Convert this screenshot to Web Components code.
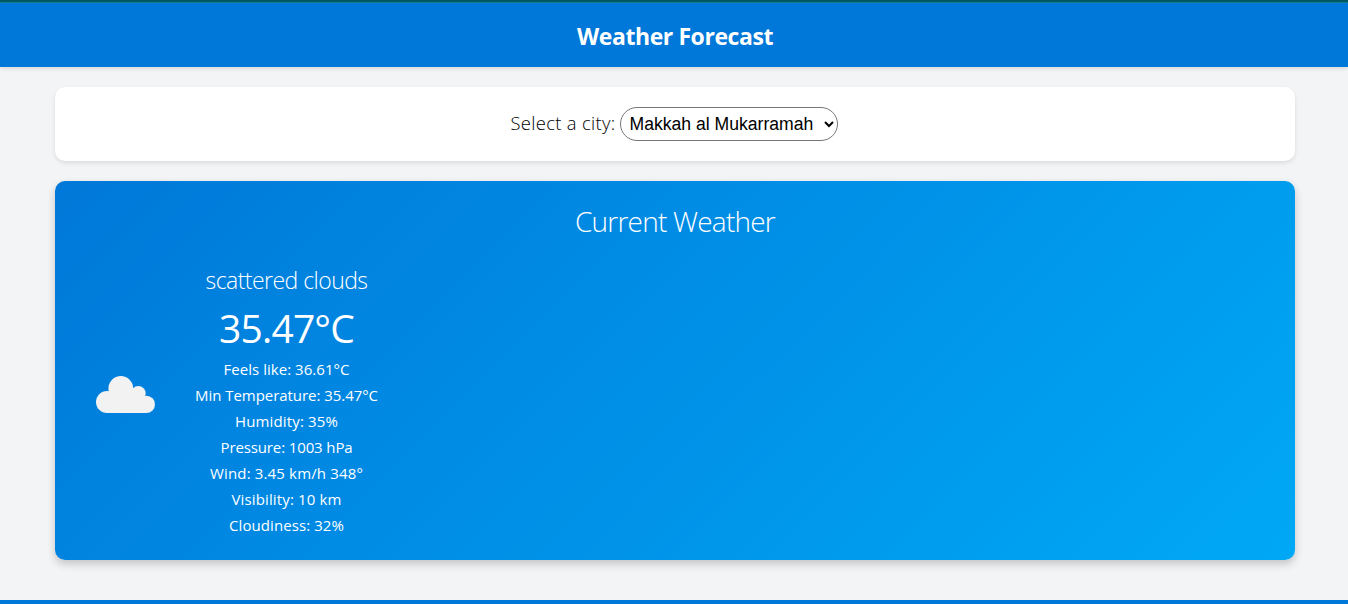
<!DOCTYPE html>
<html lang="en">
<head>
<meta charset="utf-8">
<title>Weather Forecast</title>
<style>
html, body { margin: 0; height: 100%; overflow: hidden; background: #f3f4f6; }
body { font-family: "Open Sans", "Noto Sans", sans-serif; color: #000; }
</style>
</head>
<body>
<weather-app></weather-app>
<script>
// A single line of text whose tracking is adjusted to fill the given advance width.
class FitText extends HTMLElement {
  connectedCallback() {
    const root = this.attachShadow({ mode: 'open' });
    root.innerHTML = '<style>:host{display:inline-block;white-space:nowrap}span{display:inline-block}</style><span><slot></slot></span>';
    const span = root.querySelector('span');
    const target = Number(this.getAttribute('w'));
    const n = this.textContent.length;
    const track = (target - span.getBoundingClientRect().width) / n;
    span.style.letterSpacing = track.toFixed(3) + 'px';
  }
}

class SiteHeader extends HTMLElement {
  connectedCallback() {
    this.attachShadow({ mode: 'open' }).innerHTML = `<style>
      :host { display: flex; justify-content: center; height: 67px; box-sizing: border-box; padding: 4px 0 0 2px;
        background: linear-gradient(#005a66 0 2px, #1a7a8c 2px 3px, #0078d9 3px); color: #fff; box-shadow: 0 2px 4px rgba(0,0,0,.1); }
      h1 { margin: 0; font-size: 23px; font-weight: 700; line-height: 65px; }
    </style><h1><fit-text w="196">Weather Forecast</fit-text></h1>`;
  }
}

class CityPicker extends HTMLElement {
  connectedCallback() {
    this.attachShadow({ mode: 'open' }).innerHTML = `<style>
      :host { display: flex; justify-content: center; align-items: center; gap: 4px; height: 74px; background: #fff;
        box-sizing: border-box; padding-right: 2px; border-radius: 10px; box-shadow: 0 2px 4px rgba(0,0,0,.1); }
      label { font-size: 18.4px; font-weight: 350; line-height: 34px; height: 36px; }
      select { width: 218px; height: 34px; box-sizing: border-box; margin: 0; padding: 5px; border: 1px solid #767676;
        border-radius: 20px; background: #fff; color: #000; font: 17.6px "Liberation Sans", Arial, sans-serif; }
    </style><label for="city"><fit-text w="105">Select a city:</fit-text></label>
    <select id="city"><option>Makkah al Mukarramah</option></select>`;
  }
}

class CloudIcon extends HTMLElement {
  connectedCallback() {
    this.attachShadow({ mode: 'open' }).innerHTML = `<style>
      :host { display: block; width: 100px; height: 100px; } svg { display: block; }
    </style><svg width="100" height="100" viewBox="0 0 100 100" fill="#f2f2f2">
      <circle cx="45.8" cy="37.4" r="12.4"/><circle cx="63.3" cy="42.5" r="7.4"/>
      <circle cx="32.1" cy="51" r="11.1"/><circle cx="71.4" cy="53.4" r="8.6"/>
      <path d="M32 62V46L46 40L66 43L71.4 50V62Z"/>
    </svg>`;
  }
}

class WeatherCard extends HTMLElement {
  connectedCallback() {
    const rows = [
      ['Feels like: 36.61°C', 126], ['Min Temperature: 35.47°C', 183], ['Humidity: 35%', 103],
      ['Pressure: 1003 hPa', 132], ['Wind: 3.45 km/h 348°', 153], ['Visibility: 10 km', 110], ['Cloudiness: 32%', 115]
    ].map(([text, w]) => `<li><fit-text w="${w}">${text}</fit-text></li>`).join('');
    this.attachShadow({ mode: 'open' }).innerHTML = `<style>
      :host { display: block; box-sizing: border-box; height: 379px; padding: 20px; color: #fff; border-radius: 10px;
        background: linear-gradient(135deg, #0078d9, #00a8f5); box-shadow: 0 4px 8px rgba(0,0,0,.2); }
      h2 { margin: 0 0 20px; text-align: center; font-size: 28px; font-weight: 300; line-height: 40px; height: 42px; }
      .row { display: flex; align-items: center; gap: 20px; }
      cloud-icon { margin-bottom: 1px; }
      .info { width: 183px; display: flex; flex-direction: column; align-items: center; }
      .sky { font-size: 23px; font-weight: 300; line-height: 34px; height: 36px; }
      .temp { font-size: 39px; line-height: 57px; height: 59px; }
      ul { list-style: none; margin: 0; padding: 0; font-size: 15px; text-align: center; }
      li { height: 26px; line-height: 22px; display: flex; justify-content: center; }
    </style><h2><fit-text w="200">Current Weather</fit-text></h2>
    <div class="row"><cloud-icon></cloud-icon><div class="info">
      <div class="sky"><fit-text w="162">scattered clouds</fit-text></div>
      <div class="temp"><fit-text w="135">35.47°C</fit-text></div>
      <ul>${rows}</ul></div></div>`;
  }
}

class WeatherApp extends HTMLElement {
  connectedCallback() {
    this.attachShadow({ mode: 'open' }).innerHTML = `<style>
      :host { display: flex; flex-direction: column; height: 604px; background: #f3f4f6; }
      main { display: flex; flex-direction: column; gap: 20px; padding: 20px 53px 40px 55px; }
      footer { height: 4px; background: #0078d9; }
    </style><site-header></site-header>
    <main><city-picker></city-picker><weather-card></weather-card></main><footer></footer>`;
  }
}
customElements.define('fit-text', FitText);
customElements.define('site-header', SiteHeader);
customElements.define('city-picker', CityPicker);
customElements.define('cloud-icon', CloudIcon);
customElements.define('weather-card', WeatherCard);
customElements.define('weather-app', WeatherApp);
</script>
</body>
</html>
